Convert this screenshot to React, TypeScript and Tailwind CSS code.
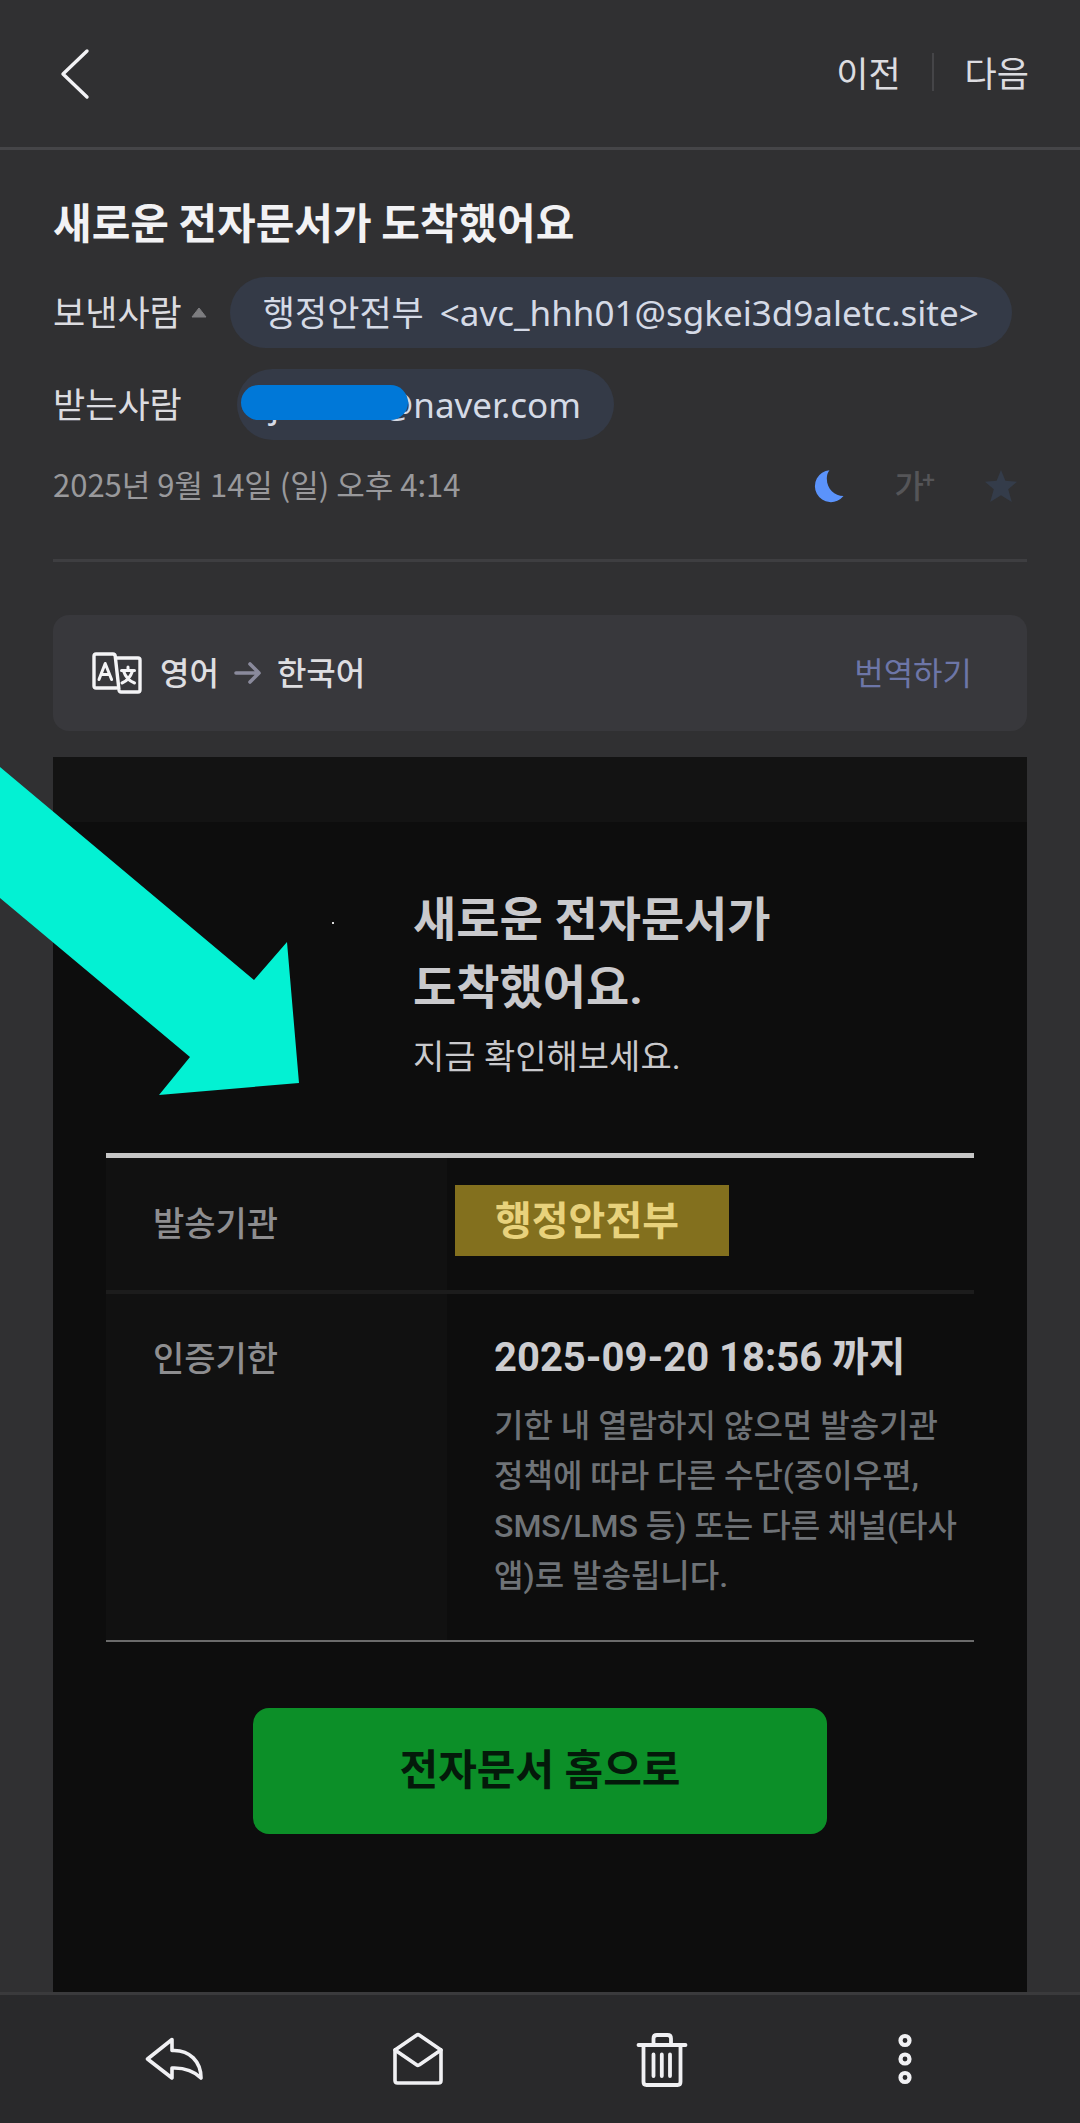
import type { ReactNode } from "react"

function BackIcon() {
  return (
    <svg width="36" height="56" viewBox="0 0 36 56" fill="none" stroke="#f2f2f5" strokeWidth="3.4" strokeLinecap="round" strokeLinejoin="round">
      <path d="M31 5 L7 28 L31 51" />
    </svg>
  )
}

function MoonIcon() {
  return (
    <svg width="34" height="34" viewBox="0 0 34 34">
      <path d="M17.5 1.2 A16 16 0 1 0 31.5 27 C22 27 13.5 19 15 7 C15.4 4.6 16.3 2.8 17.5 1.2 Z" fill="#5b93fb" />
    </svg>
  )
}

function StarIcon() {
  return (
    <svg width="34" height="34" viewBox="0 0 34 34">
      <path d="M17 1 L21.4 11.8 L33 12.7 L24.2 20.3 L27.8 33 L17 26.3 L6.2 33 L9.8 20.3 L1 12.7 L12.6 11.8 Z" fill="#343c4a" />
    </svg>
  )
}

function TranslateIcon() {
  return (
    <svg width="50" height="42" viewBox="0 0 50 42" fill="none" stroke="#f4f4f6" strokeWidth="3.4" strokeLinecap="round" strokeLinejoin="round">
      <path d="M24.5 36 H4 Q2 36 2 34 V4 Q2 2 4 2 H21 Q23 2 23.2 4 L27 38 Q27.3 40 29 40 H46 Q48 40 48 38 V8 Q48 6 46 6 H24" />
      <path d="M7 27.5 L13.2 11.5 L19.6 27.5 M9.2 22.5 H17.2" strokeWidth="3" />
      <path d="M29.5 18.5 H42.5 M36 15 V18 M40.5 19 Q37.5 28 30 31 M31.5 19 Q34.5 28 42.5 31" strokeWidth="3" />
    </svg>
  )
}

function ArrowIcon() {
  return (
    <svg width="30" height="24" viewBox="0 0 30 24" fill="none" stroke="#8a8a9c" strokeWidth="3.6" strokeLinecap="round" strokeLinejoin="round">
      <path d="M3 12 H26 M17 3 L26 12 L17 21" />
    </svg>
  )
}

function ReplyIcon() {
  return (
    <svg width="60" height="54" viewBox="0 0 60 54" fill="none" stroke="#f0f0f3" strokeWidth="3.6" strokeLinecap="round" strokeLinejoin="round">
      <path d="M27 7.5 L2.5 27 L27 46 V36 C39 35.5 49 39 56 46 C56 30 45 17.5 27 18.5 Z" />
    </svg>
  )
}

function MailIcon() {
  return (
    <svg width="52" height="54" viewBox="0 0 52 54" fill="none" stroke="#f0f0f3" strokeWidth="3.6" strokeLinecap="round" strokeLinejoin="round">
      <path d="M3 18 L24.5 3.2 Q26 2.2 27.5 3.2 L49 18 V48.5 Q49 51 46.5 51 H5.5 Q3 51 3 48.5 Z" />
      <path d="M3 18 L24.5 32.8 Q26 33.8 27.5 32.8 L49 18" />
    </svg>
  )
}

function TrashIcon() {
  return (
    <svg width="52" height="56" viewBox="0 0 52 56" fill="none" stroke="#f0f0f3" strokeWidth="3.8" strokeLinecap="round" strokeLinejoin="round">
      <path d="M2.5 14 H49.5 M17.5 13.5 V7.5 Q17.5 4 21 4 H31.5 Q35 4 35 7.5 V13.5" />
      <path d="M7.5 14.5 V51 Q7.5 54 10.5 54 H41.5 Q44.5 54 44.5 51 V14.5" />
      <path d="M17.5 23.5 V45 M25.8 23.5 V45 M34 23.5 V45" />
    </svg>
  )
}

function MoreIcon() {
  return (
    <svg width="16" height="54" viewBox="0 0 16 54" fill="none" stroke="#f0f0f3" strokeWidth="4.2">
      <circle cx="8" cy="8.5" r="4.5" />
      <circle cx="8" cy="27" r="4.5" />
      <circle cx="8" cy="45.5" r="4.5" />
    </svg>
  )
}

const actions: { label: string; icon: ReactNode }[] = [
  { label: "답장", icon: <ReplyIcon /> },
  { label: "읽음", icon: <MailIcon /> },
  { label: "삭제", icon: <TrashIcon /> },
  { label: "더보기", icon: <MoreIcon /> },
]

export default function App() {
  return (
    <div className="relative flex min-h-screen flex-col overflow-hidden bg-[#303032] font-['Noto_Sans_CJK_KR',sans-serif] text-[#dcdce0]">

      <header className="flex h-[150px] items-center justify-between border-b-[3px] border-[#454548] pr-[51px] pl-[56px]">
        <button type="button" aria-label="뒤로">
          <BackIcon />
        </button>
        <nav className="flex items-center pb-1 text-[35px] leading-[50px]">
          <button type="button">이전</button>
          <span className="mx-[31px] h-[38px] w-[2px] bg-[#454548]" />
          <button type="button">다음</button>
        </nav>
      </header>

      <main className="flex flex-1 flex-col px-[53px] pt-[43px]">
        <h1 className="text-[42px] leading-[56px] font-bold text-[#f2f2f4]">
          새로운 전자문서가 도착했어요
        </h1>

        {/* 보낸사람 / 받는사람 */}
        <div className="mt-[28px] flex h-[71px] items-center text-[35px] leading-[50px]">
          <span className="pb-1">보낸사람</span>
          <svg className="ml-[9px]" width="16" height="11" viewBox="0 0 16 11">
            <path d="M8 1 L15 10 H1 Z" fill="#7d7d80" stroke="#7d7d80" strokeLinejoin="round" />
          </svg>
          <span className="ml-[23px] flex h-full items-center gap-[16px] rounded-full bg-[#343a47] px-[33px] whitespace-nowrap text-[#d5dae6]">
            <span className="pb-1">행정안전부</span>
            <span className="font-['Noto_Sans',sans-serif]">&lt;avc_hhh01@sgkei3d9aletc.site&gt;</span>
          </span>
        </div>

        <div className="mt-[21px] flex h-[71px] items-center text-[35px] leading-[50px]">
          <span className="w-[184px] pb-1">받는사람</span>
          <span className="relative flex h-full w-[377px] items-center justify-between rounded-full bg-[#343a47] px-[33px] font-['Noto_Sans',sans-serif] text-[#d5dae6]">
            <span>j</span>
            <span>@naver.com</span>
            <span className="absolute top-[16px] left-[4px] h-[35px] w-[167px] rounded-full bg-[#0078d8]" />
          </span>
        </div>

        <div className="mt-[26px] flex h-[40px] items-center justify-between">
          <time className="pb-1 text-[31px] leading-[40px] text-[#99999c]">2025년 9월 14일 (일) 오후 4:14</time>
          <div className="flex items-center gap-[49px] pr-[9px]">
            <button type="button" aria-label="다크 모드">
              <MoonIcon />
            </button>
            <button type="button" className="flex items-center pb-1 text-[32px] leading-[40px] font-medium text-[#555558]">
              가<span className="-ml-0.5 self-start text-[22px] leading-[28px] font-bold">+</span>
            </button>
            <button type="button" aria-label="중요">
              <StarIcon />
            </button>
          </div>
        </div>

        <hr className="mt-[53px] border-t-[3px] border-[#3e3e41]" />

        <section className="mt-[53px] flex h-[116px] items-center rounded-2xl bg-[#38383c] pr-[55px] pl-[39px] text-[32px] leading-[48px]">
          <TranslateIcon />
          <strong className="ml-[18px] pb-1 font-medium text-[#dedee1]">영어</strong>
          <span className="mx-[14px]">
            <ArrowIcon />
          </span>
          <strong className="pb-1 font-medium text-[#dedee1]">한국어</strong>
          <button type="button" className="ml-auto pb-1 text-[#6d76a8]">번역하기</button>
        </section>

        {/* 메일 본문 */}
        <article className="relative mt-[26px] flex flex-1 flex-col bg-[#0d0d0d] font-['Roboto','Noto_Sans_CJK_KR',sans-serif]">
          <div className="h-[65px] bg-[#131313]" />

          <div className="flex pt-[64px] text-[#c9c9cc]">
            <div className="w-[360px]">
              <div className="mt-[36px] ml-[279px] h-[2px] w-[2px] bg-[#d9d9d9]" />
            </div>
            <div>
              <h2 className="text-[47px] leading-[68px] font-bold">
                새로운 전자문서가<br />도착했어요.
              </h2>
              <p className="mt-[10px] text-[34px] leading-[50px]">지금 확인해보세요.</p>
            </div>
          </div>

          <div className="mt-[71px] px-[53px]">
            <table className="w-full border-collapse border-t-[5px] border-b-2 border-t-[#c6c6c6] border-b-[#6b6b6b] text-left">
              <tbody>
                <tr className="h-[136px] border-b-[4px] border-[#1c1c1c]">
                  <th className="w-[341px] bg-[#111111] pl-[47px] text-[34px] leading-[50px] font-medium text-[#8e8e90]">
                    발송기관
                  </th>
                  <td className="pt-[27px] pl-2 align-top">
                    <mark className="block w-fit bg-[#83701e] pt-3 pr-[50px] pb-[9px] pl-[40px] text-[40px] leading-[50px] font-bold text-[#e8d27c]">
                      행정안전부
                    </mark>
                  </td>
                </tr>
                <tr>
                  <th className="bg-[#111111] pt-[40px] pl-[47px] align-top text-[34px] leading-[50px] font-medium text-[#8e8e90]">
                    인증기한
                  </th>
                  <td className="pt-[34px] pr-2 pb-[39px] pl-[47px] align-top">
                    <p className="text-[40px] leading-[60px] font-bold text-[#cdcdd0]">
                      2025-09-20 18:56 까지
                    </p>
                    <p className="mt-[13px] text-[32px] leading-[50px] font-medium break-keep text-[#6f7377]">
                      기한 내 열람하지 않으면 발송기관 정책에 따라 다른 수단(종이우편, SMS/LMS 등) 또는 다른 채널(타사 앱)로 발송됩니다.
                    </p>
                  </td>
                </tr>
              </tbody>
            </table>
          </div>

          <button type="button" className="mx-[200px] mt-[66px] h-[126px] rounded-2xl bg-[#0c8f28] text-[42px] leading-[60px] font-bold text-[#04190a]">
            전자문서 홈으로
          </button>

          <svg className="absolute top-[10px] -left-[53px]" width="300" height="329" viewBox="0 0 300 329">
            <path d="M0 0 L254 213 L287 175 L299 316 L159 328 L190 290 L0 131 Z" fill="#03f1d3" />
          </svg>
        </article>
      </main>

      <footer className="flex h-[131px] items-center border-t-[3px] border-[#3a3a3c] bg-[#29292b] px-[53px]">
        {actions.map((action) => (
          <button key={action.label} type="button" aria-label={action.label} className="flex h-full flex-1 items-center justify-center">
            {action.icon}
          </button>
        ))}
      </footer>

    </div>
  )
}
